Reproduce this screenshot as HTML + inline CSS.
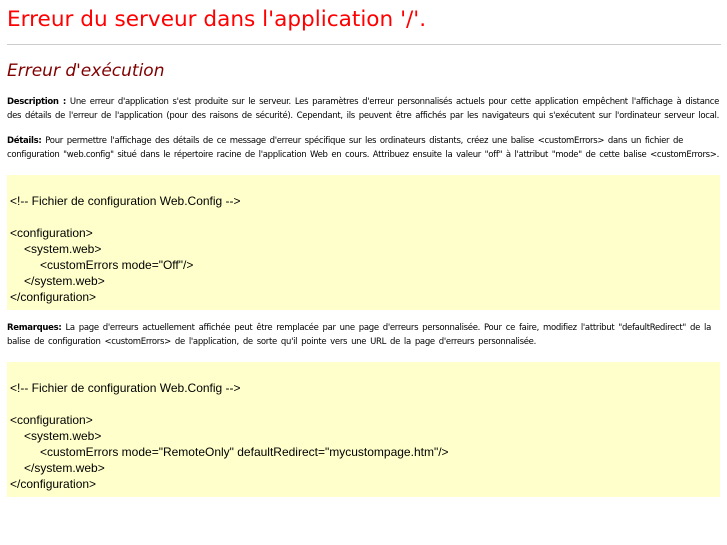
<!DOCTYPE html>
<html><head><meta charset="utf-8"><style>
body{margin:0;background:#fff;width:727px;height:545px;overflow:hidden;position:relative;font-family:"DejaVu Sans","Liberation Sans",sans-serif;}
.a{position:absolute;}
h1{position:absolute;left:7px;top:7px;margin:0;font-weight:normal;color:#f00;font-size:21.6px;font-family:"DejaVu Sans",sans-serif;}
hr{position:absolute;left:7px;top:44px;width:714px;margin:0;border:0;border-top:1px solid #ccc;height:0}
h2{position:absolute;left:7px;top:61px;margin:0;font-weight:normal;font-style:italic;color:#800000;font-size:17px;}
.p{font-size:8.5px;color:#000;line-height:14px;letter-spacing:-0.3px}
.p div{white-space:nowrap;overflow:hidden;height:14px}
.j{text-align:justify;text-align-last:justify;}
.box{position:absolute;left:7px;width:713px;background:#ffffcc;font-family:"Liberation Sans",sans-serif;font-size:12px;line-height:16px;color:#000}
.box div{height:16px;padding-left:3px;white-space:pre}
.i1{padding-left:17px!important}.i2{padding-left:33px!important}
</style></head><body>
<h1>Erreur du serveur dans l'application '/'.</h1>
<hr>
<h2>Erreur d'exécution</h2>
<div class="a p" style="left:7px;top:95px">
<div class="j" style="width:712px"><b>Description :</b> Une erreur d'application s'est produite sur le serveur. Les paramètres d'erreur personnalisés actuels pour cette application empêchent l'affichage à distance</div>
<div class="j" style="width:712px">des détails de l'erreur de l'application (pour des raisons de sécurité). Cependant, ils peuvent être affichés par les navigateurs qui s'exécutent sur l'ordinateur serveur local.</div></div>
<div class="a p" style="left:7px;top:134px">
<div class="j" style="width:676px"><b>Détails:</b> Pour permettre l'affichage des détails de ce message d'erreur spécifique sur les ordinateurs distants, créez une balise &lt;customErrors&gt; dans un fichier de</div>
<div class="j" style="width:712px">configuration "web.config" situé dans le répertoire racine de l'application Web en cours. Attribuez ensuite la valeur "off" à l'attribut "mode" de cette balise &lt;customErrors&gt;.</div></div>
<div class="box" style="top:175px;height:135px;padding-top:18px;box-sizing:border-box">
<div>&lt;!-- Fichier de configuration Web.Config --&gt;</div><div></div>
<div>&lt;configuration&gt;</div>
<div class="i1">&lt;system.web&gt;</div>
<div class="i2">&lt;customErrors mode="Off"/&gt;</div>
<div class="i1">&lt;/system.web&gt;</div>
<div>&lt;/configuration&gt;</div>
</div>
<div class="a p" style="left:7px;top:321px">
<div class="j" style="width:704px"><b>Remarques:</b> La page d'erreurs actuellement affichée peut être remplacée par une page d'erreurs personnalisée. Pour ce faire, modifiez l'attribut "defaultRedirect" de la</div>
<div class="j" style="width:529px">balise de configuration &lt;customErrors&gt; de l'application, de sorte qu'il pointe vers une URL de la page d'erreurs personnalisée.</div></div>
<div class="box" style="top:362px;height:135px;padding-top:18px;box-sizing:border-box">
<div>&lt;!-- Fichier de configuration Web.Config --&gt;</div><div></div>
<div>&lt;configuration&gt;</div>
<div class="i1">&lt;system.web&gt;</div>
<div class="i2">&lt;customErrors mode="RemoteOnly" defaultRedirect="mycustompage.htm"/&gt;</div>
<div class="i1">&lt;/system.web&gt;</div>
<div>&lt;/configuration&gt;</div>
</div>
</body></html>
